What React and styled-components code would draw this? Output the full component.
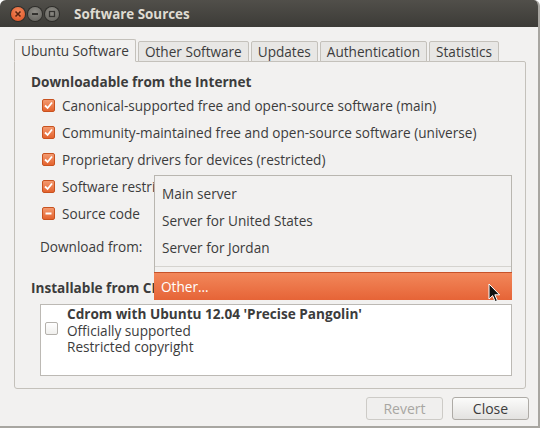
import React from 'react'
import styled, {createGlobalStyle} from 'styled-components'

const Global = createGlobalStyle`
    html, body { margin: 0; padding: 0; background: #ffffff; }
    body { font-family: "Open Sans", "DejaVu Sans", sans-serif; }
`
const Win = styled.div`
    position: relative;
    width: 540px;
    height: 428px;
    box-sizing: border-box;
    display: flex;
    flex-direction: column;
    background: #f2f1f0;
    border-right: 2px solid #a8a6a1;
    border-bottom: 2px solid #a8a6a1;
    border-radius: 6px 6px 0 0;
    overflow: hidden;
    color: #3c3c3c;
    font-size: 13.6px;
`
const TitleBar = styled.div`
    height: 27px;
    flex: none;
    display: flex;
    align-items: center;
    padding-left: 11px;
    background: linear-gradient(#514f4a, #3c3b37);
`
const WinBtn = styled.div`
    width: 14px;
    height: 14px;
    border-radius: 50%;
    margin-right: 3px;
    display: flex;
    align-items: center;
    justify-content: center;
    background: ${p => p.close ? 'radial-gradient(circle at 50% 35%, #f38a5e, #dc4d1d)' : 'radial-gradient(circle at 50% 35%, #8e8c86, #5f5e59)'};
    box-shadow: 0 0 0 1px #2e2d2a;
`
const Title = styled.div`
    margin-left: 12px;
    color: #dfdbd2;
    font-weight: 700;
    font-size: 13.4px;
`
const Body = styled.div`
    flex: 1;
    display: flex;
    flex-direction: column;
    padding: 12px 12px 6px 14px;
`
const TabRow = styled.div`
    display: flex;
    align-items: flex-end;
    gap: 2px;
    height: 23px;
    margin-bottom: -1px;
    position: relative;
    z-index: 1;
`
const Tab = styled.div`
    height: ${p => p.active ? '23px' : '21px'};
    box-sizing: border-box;
    padding: 0 6px;
    display: flex;
    align-items: center;
    border: 1px solid #c4c1bb;
    border-bottom: ${p => p.active ? '1px solid #f2f1f0' : '1px solid #c4c1bb'};
    border-radius: 2px 2px 0 0;
    background: ${p => p.active ? '#f2f1f0' : '#e8e7e5'};
    color: #3c3c3c;
`
const Panel = styled.div`
    flex: 1;
    border: 1px solid #c4c1bb;
    border-radius: 0 2px 3px 3px;
    padding: 10px 13px 0 16px;
    display: flex;
    flex-direction: column;
`
const Heading = styled.div`
    font-weight: 700;
    height: 20px;
    line-height: 20px;
    margin-top: ${p => p.gap || 0}px;
`
const CheckRow = styled.div`
    height: 27px;
    display: flex;
    align-items: center;
    padding-left: 11px;
`
const Box = styled.div`
    width: 13px;
    height: 13px;
    box-sizing: border-box;
    border-radius: 2px;
    flex: none;
    margin-right: 7px;
    display: flex;
    align-items: center;
    justify-content: center;
    border: 1px solid ${p => p.on ? '#c8521f' : '#b4b1ac'};
    background: ${p => p.on ? 'linear-gradient(#f39a70, #e4632e)' : 'linear-gradient(#ffffff, #f0efed)'};
`
const DownloadRow = styled.div`
    height: 27px;
    margin-top: 6px;
    display: flex;
    align-items: center;
    padding-left: 9px;
`
const ListBox = styled.div`
    margin: 6px 0 0 9px;
    height: 72px;
    box-sizing: border-box;
    background: #ffffff;
    border: 1px solid #bcb9b4;
    display: flex;
    align-items: flex-start;
    padding: 1px 0 0 4px;
    & > ${Box} { margin-top: 16px; }
`
const ListText = styled.div`
    margin-left: 2px;
    line-height: 16.5px;
`
const Bold = styled.div`
    font-weight: 700;
`
const Footer = styled.div`
    display: flex;
    justify-content: flex-end;
    gap: 9px;
    margin-top: 8px;
    margin-right: -3px;
`
const Button = styled.div`
    width: 77px;
    height: 23px;
    box-sizing: border-box;
    border: 1px solid ${p => p.disabled ? '#cdcbc7' : '#aeaba6'};
    border-radius: 3px;
    background: ${p => p.disabled ? '#f0efee' : 'linear-gradient(#fbfbfa, #e3e2e0)'};
    color: ${p => p.disabled ? '#a8a6a2' : '#3c3c3c'};
    display: flex;
    align-items: center;
    justify-content: center;
    font-size: 14px;
`
const Popup = styled.div`
    position: absolute;
    left: 154px;
    top: 175px;
    width: 358px;
    height: 125px;
    box-sizing: border-box;
    background: #f2f1f0;
    border: 1px solid #b9b6b0;
    padding-top: 4px;
    z-index: 5;
`
const Item = styled.div`
    height: 27px;
    display: flex;
    align-items: center;
    padding-left: 7px;
    color: ${p => p.hot ? '#ffffff' : '#3c3c3c'};
    background: ${p => p.hot ? 'linear-gradient(#f2875a, #e66437)' : 'transparent'};
    margin: ${p => p.hot ? '0 -1px' : '0'};
    border-top: ${p => p.hot ? '1px solid #c7522a' : 'none'};
`
const Sep = styled.div`
    height: 1px;
    background: #d5d3cf;
    margin: 5px 0 5px;
`
const Cursor = styled.svg`
    position: absolute;
    left: 488px;
    top: 283px;
    z-index: 9;
`

const Check = () => (
    <svg width="9" height="9" viewBox="0 0 9 9">
        <path d="M1 4.5 L3.6 7 L8 1.5" fill="none" stroke="#ffffff" strokeWidth="1.8" />
    </svg>
)
const Dash = () => (
    <svg width="9" height="9" viewBox="0 0 9 9">
        <path d="M1.5 4.5 H7.5" stroke="#ffffff" strokeWidth="1.8" />
    </svg>
)

const sources = [
    ['Canonical-supported free and open-source software (main)', 'check'],
    ['Community-maintained free and open-source software (universe)', 'check'],
    ['Proprietary drivers for devices (restricted)', 'check'],
    ['Software restricted by copyright or legal issues (multiverse)', 'check'],
    ['Source code', 'dash'],
]
const tabs = ['Ubuntu Software', 'Other Software', 'Updates', 'Authentication', 'Statistics']
const servers = ['Main server', 'Server for United States', 'Server for Jordan']

function App(){
    return (
        <>
            <Global />
            <Win>
                <TitleBar>
                    <WinBtn close>
                        <svg width="8" height="8" viewBox="0 0 8 8"><path d="M1.5 1.5 L6.5 6.5 M6.5 1.5 L1.5 6.5" stroke="#5a2410" strokeWidth="1.6" /></svg>
                    </WinBtn>
                    <WinBtn>
                        <svg width="8" height="8" viewBox="0 0 8 8"><path d="M1 4 H7" stroke="#33322f" strokeWidth="1.8" /></svg>
                    </WinBtn>
                    <WinBtn>
                        <svg width="8" height="8" viewBox="0 0 8 8"><rect x="1.5" y="1.5" width="5" height="5" fill="none" stroke="#33322f" strokeWidth="1.3" /></svg>
                    </WinBtn>
                    <Title>Software Sources</Title>
                </TitleBar>
                <Body>
                    <TabRow>
                        {tabs.map((t, i) => <Tab key={t} active={i === 0}>{t}</Tab>)}
                    </TabRow>
                    <Panel>
                        <Heading>Downloadable from the Internet</Heading>
                        {sources.map(([label, kind]) =>
                            <CheckRow key={label}>
                                <Box on>{kind === 'check' ? <Check /> : <Dash />}</Box>
                                {label}
                            </CheckRow>)}
                        <DownloadRow>Download from:</DownloadRow>
                        <Heading gap={18}>Installable from CD-ROM/DVD</Heading>
                        <ListBox>
                            <Box />
                            <ListText>
                                <Bold>Cdrom with Ubuntu 12.04 'Precise Pangolin'</Bold>
                                <div>Officially supported</div>
                                <div>Restricted copyright</div>
                            </ListText>
                        </ListBox>
                    </Panel>
                    <Footer>
                        <Button disabled>Revert</Button>
                        <Button>Close</Button>
                    </Footer>
                </Body>
                <Popup>
                    {servers.map(s => <Item key={s}>{s}</Item>)}
                    <Sep />
                    <Item hot>Other...</Item>
                </Popup>
                <Cursor width="13" height="20" viewBox="0 0 13 20">
                    <path d="M1 1 L1 16 L4.6 12.6 L7.2 18.6 L9.4 17.6 L6.8 11.8 L11.6 11.8 Z" fill="#111111" stroke="#ffffff" strokeWidth="1" />
                </Cursor>
            </Win>
        </>
    )
}

export default App
